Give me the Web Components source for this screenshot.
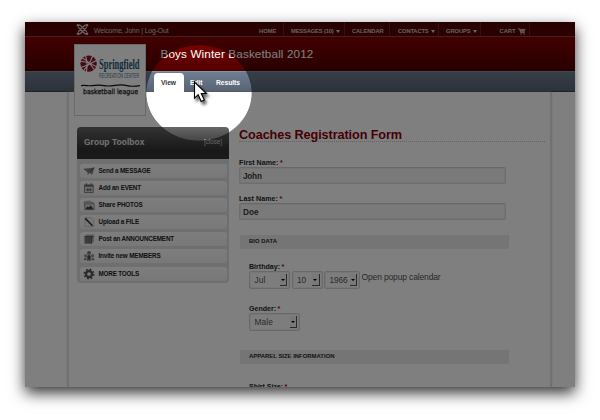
<!DOCTYPE html>
<html lang="en"><head><meta charset="utf-8"><title>Coaches Registration</title>
<style>
html,body{margin:0;width:600px;height:420px;overflow:hidden;background:#fff;font-family:"Liberation Sans",Arial,sans-serif}
body{display:grid;place-items:start}
</style></head><body>
<league-page></league-page>
<script>
const define=(name,html,setup)=>customElements.define(name,class extends HTMLElement{
  connectedCallback(){
    if(this.shadowRoot)return;
    const r=this.attachShadow({mode:'open'});
    const t=document.createElement('template');
    t.innerHTML=typeof html==='function'?html(this):html;
    r.append(t.content.cloneNode(true));
    if(setup)setup(this,r);
  }
});

/* One line of text whose tracking is adjusted to fill the width in "w". */
define('fit-text',e=>`<style>:host{display:inline-block;white-space:nowrap;flex:none;width:${e.getAttribute('w')}px}span{display:inline-block}</style><span><slot></slot></span>`,(e,r)=>{
  const s=r.querySelector('span'),n=e.textContent.length;
  s.style.letterSpacing=((+e.getAttribute('w')-s.getBoundingClientRect().width)/n).toFixed(3)+'px';
});

define('menu-item',e=>`<style>
:host{display:flex;align-items:center;box-sizing:border-box;width:${e.getAttribute('box')}px;height:14px;padding-left:${e.getAttribute('pad')}px;border-right:1px solid #682020;font:bold 5.8px/14px "Liberation Sans",sans-serif;color:#d2c4c4;gap:2.5px;padding-top:4px;flex:none}
i{border:2.6px solid transparent;border-top:3.5px solid #d8cccc;border-bottom:0}
</style><slot></slot>${e.hasAttribute('drop')?'<i></i>':''}`);

define('top-bar',`<style>
:host{display:flex;height:15px;box-sizing:border-box;background:linear-gradient(#4c0000,#5a0000);border-bottom:1px solid #7d4545;padding-left:51px}
.w{font-size:6.9px;line-height:16.5px;color:#d0c4c4;margin:0 90.5px 0 5px;padding-top:1px;height:13px}
svg{flex:none}
</style>
<svg width="13" height="13" viewBox="0 0 13 13" style="margin-top:1px" fill="none" stroke="#d5c5c5" stroke-width="1.3" stroke-linecap="round"><path d="M2.6 4.6L8 10Q9.6 11.6 10.9 10.3M10.4 4.6L5 10Q3.4 11.6 2.1 10.3M2.6 8.4L8 3Q9.6 1.4 10.9 2.7M10.4 8.4L5 3Q3.4 1.4 2.1 2.7"/><g fill="#d5c5c5" stroke="none"><circle cx="2" cy="2.2" r="1.3"/><circle cx="11" cy="2.2" r="1.3"/><circle cx="2" cy="10.8" r="1.3"/><circle cx="11" cy="10.8" r="1.3"/></g></svg>
<div class="w"><fit-text w="74.5">Welcome, John | Log-Out</fit-text></div>
<menu-item box="24.5" pad="0"><fit-text w="17.5">HOME</fit-text></menu-item>
<menu-item box="61" pad="7.5" drop><fit-text w="42.5">MESSAGES (10)</fit-text></menu-item>
<menu-item box="45.5" pad="7.5"><fit-text w="31.5">CALENDAR</fit-text></menu-item>
<menu-item box="49" pad="8" drop><fit-text w="30.5">CONTACTS</fit-text></menu-item>
<menu-item box="42" pad="7" drop><fit-text w="24.5">GROUPS</fit-text></menu-item>
<menu-item box="49" pad="18.5"><fit-text w="16">CART</fit-text><svg width="8" height="7" viewBox="0 0 8 7" fill="none" stroke="#d8cccc"><path d="M0 .8h1.5L2.7 4.6h4M2 1.4h5.3M2.2 2.4h4.8M2.5 3.3h4.2" stroke-width=".9"/><path d="M3 5.4v1.2M6.2 5.4v1.2" stroke-width="1.2"/></svg></menu-item>`);

define('team-header',`<style>
:host{display:block;height:34px;box-sizing:border-box;padding:3px 0 0 135.5px;background:linear-gradient(#850000,#500000);color:#fff;font-size:11.7px;line-height:27px}
</style><fit-text w="153">Boys Winter Basketball 2012</fit-text>`);

define('tab-bar',`<style>
:host{display:flex;height:21px;box-sizing:border-box;padding:2px 0 0 129px;background:linear-gradient(#6e7e91,#586474);border-top:1px solid #8391a1;border-bottom:1px solid #3b4351;color:#fff;font:bold 6.7px/18px "Liberation Sans",sans-serif}
.v{width:22.5px;height:20px;line-height:20px;margin-top:-1px;padding-left:7px;background:#fff;color:#333;border-radius:4px 4px 0 0}
.e{margin:0 13.5px 0 6.5px;text-decoration:underline}
</style><div class="v"><fit-text w="15">View</fit-text></div><div class="e"><fit-text w="12.5">Edit</fit-text></div><fit-text w="24">Results</fit-text>`);

define('team-logo',`<style>
:host{display:block;box-sizing:border-box;width:72px;height:72px;background:#fff;border:1px solid #d5d5d5}
svg{display:block}
</style><svg width="70" height="70" viewBox="75 45 70 70">
<circle cx="88.6" cy="63.6" r="8.2" fill="#8e1230"/>
<g fill="none" stroke="#fff" stroke-width="1.1"><path d="M80.5 61.5Q88 61.5 97 67M85.5 55.5Q88 63 86.4 72M92.5 56Q90 64 84 70M81 67.5Q89 65 96.3 60.5M81.8 58Q88 60 94.5 70"/></g>
<text transform="translate(99 69) scale(.565 1)" font-family="Liberation Serif,serif" font-size="15" font-weight="bold" fill="#175878">Springfield</text>
<text transform="translate(99 78) scale(.587 1)" font-family="Liberation Sans,sans-serif" font-size="6.3" fill="#4d7188">RECREATION CENTER</text>
<path d="M81 85.6q3-.5 6 0t8-.2 9 .2 11-.2 12 .2 13 0" stroke="#111" stroke-width="1.1" fill="none"/>
<text x="83" y="94" textLength="55" lengthAdjust="spacingAndGlyphs" font-family="DejaVu Sans,sans-serif" font-size="7" fill="#111" stroke="#111" stroke-width=".25">basketball league</text>
</svg>`);

const icons={
send:'<path d="M1 4L12 2.5 9.5 10 6.5 8 5 10.5 4.6 7z" fill="#888"/><path d="M4.6 7L11.5 3 6.5 8M1 4l3.6 3" stroke="#555" fill="none" stroke-width=".8"/>',
event:'<path d="M1.5 3h9v8h-9z" fill="#ddd" stroke="#777"/><path d="M1.5 4h9" stroke="#777" stroke-width="2"/><path d="M3.5 1.3v2.5M8.5 1.3v2.5M3 8h6M5 6.5v3M7.5 6.5v3" stroke="#666" stroke-width="1.1"/>',
photo:'<path d="M1 3l5-1 5 2 .5 7H2z" fill="#bbb" stroke="#999" stroke-width=".7"/><path d="M2 5h9.5v6H2z" fill="#ddd" stroke="#777" stroke-width=".7"/><path d="M2.5 10.5l2-3 1.5 1 2-2 3 4z" fill="#444"/>',
file:'<path d="M2 1.5h7l2 2V11H2z" fill="#eee" stroke="#bbb" stroke-width=".7"/><path d="M2.3 2.5L9.8 10" stroke="#333" stroke-width="1.6"/>',
post:'<path d="M3 1.5h8.5v8H3z" fill="#bbb"/><path d="M1.5 3.5H9V11H1.5z" fill="#777"/><path d="M1.5 3.5h9L9 5M9 4v7" stroke="#555" fill="none"/>',
people:'<circle cx="6.2" cy="3" r="2" fill="#777"/><circle cx="2.8" cy="6" r="1.8" fill="#999"/><circle cx="9.8" cy="6" r="1.8" fill="#999"/><path d="M4 6.2l2.2-1 2.2 1V11H4zM.8 9.5Q1 7.8 3.5 8v2.5H1zM9 8q2.5 0 2.7 1.5v1H9z" fill="#888"/><path d="M6.2 5.5v4" stroke="#222" stroke-width="1.1"/>',
gear:'<circle cx="6.2" cy="6.2" r="3.1" fill="none" stroke="#555" stroke-width="2.4"/><circle cx="6.2" cy="6.2" r="4.9" fill="none" stroke="#555" stroke-width="1.5" stroke-dasharray="1.9 1.95"/>'
};
define('tool-row',e=>`<style>
:host{display:flex;align-items:center;height:14px;margin-bottom:3.1px;box-sizing:border-box;border-radius:3px;background:linear-gradient(#fcfcfc,#f0f0f0);padding-left:3.5px;gap:3.5px;font:bold 6.3px/14px "Liberation Sans",sans-serif;color:#222}
</style><svg width="12" height="12" viewBox="0 0 12.4 12.4">${icons[e.getAttribute('icon')]}</svg><slot></slot>`);

define('tool-box',`<style>
:host{display:block;width:152px;box-sizing:border-box;height:156px;border-radius:4px;background:#dedede;flex:none}
header{height:32px;box-sizing:border-box;display:flex;align-items:center;padding:0 7px 2px;justify-content:space-between;background:linear-gradient(#666,#303030 75%,#353535);border-radius:4px 4px 0 0;border-bottom:1px solid #333}
b{font-size:8.4px;color:#e6e6e6}small{font-size:6.3px;color:#ccc}
section{padding:5px 2.5px 0}
</style><header><b><fit-text w="60.5">Group Toolbox</fit-text></b><small><fit-text w="18">[close]</fit-text></small></header>
<section>
<tool-row icon="send"><fit-text w="52">Send a MESSAGE</fit-text></tool-row>
<tool-row icon="event"><fit-text w="42.5">Add an EVENT</fit-text></tool-row>
<tool-row icon="photo"><fit-text w="44">Share PHOTOS</fit-text></tool-row>
<tool-row icon="file"><fit-text w="40.5">Upload a FILE</fit-text></tool-row>
<tool-row icon="post"><fit-text w="75.5">Post an ANNOUNCEMENT</fit-text></tool-row>
<tool-row icon="people"><fit-text w="62">Invite new MEMBERS</fit-text></tool-row>
<tool-row icon="gear"><fit-text w="40.5">MORE TOOLS</fit-text></tool-row>
</section>`);

define('field-label',e=>`<style>:host{display:flex;gap:1.5px;height:9px;font:bold 7.1px/11px "Liberation Sans",sans-serif;color:#262626}em{color:#b00020;font-style:normal}</style><slot></slot><em>*</em>`);
define('text-field',`<style>:host{display:block;box-sizing:border-box;width:267px;height:17px;border:1px solid #dcdcdc;border-top-color:#d0d0d0;box-shadow:inset 0 0 0 1px #e9e9e9;border-radius:2px;background:#f5f5f5;padding-left:3px;font:bold 8.2px/17px "Liberation Sans",sans-serif;color:#3c3c3c}</style><slot></slot>`);
define('drop-down',e=>`<style>
:host{display:flex;justify-content:space-between;align-items:center;box-sizing:border-box;width:${e.getAttribute('box')}px;height:18px;border:1px solid #d2d2d2;box-shadow:inset 0 0 0 1px #eee;border-radius:2px;background:#fafafa;padding:0 2px 0 4.5px;font:8.3px/17px "Liberation Sans",sans-serif;color:#555;flex:none}
i{box-sizing:border-box;width:7.5px;height:12px;background:#f2f2f2;border-right:1px solid #555;border-bottom:1px solid #555;display:grid;place-items:center}
i::before{content:"";border:2px solid transparent;border-top:2.5px solid #000;border-bottom:0}
</style><slot></slot><i></i>`);
define('section-bar',`<style>:host{display:block;box-sizing:border-box;width:269.5px;height:13.5px;background:#ebebeb;padding-left:9.5px;font:bold 5.9px/13.5px "Liberation Sans",sans-serif;color:#262626}</style><slot></slot>`);

define('registration-form',`<style>
:host{display:block;width:306px;flex:none}
h1{margin:0 0 16px;height:15px;box-sizing:border-box;border-bottom:1px dotted #c4c4c4;font:bold 12.7px/16.5px "Liberation Sans",sans-serif;color:#8c0008}
.gap{margin-top:10px}
.in{padding-left:10px}
.row{display:flex;gap:1.5px}
.open{font-size:8.5px;line-height:12px;color:#505050}
</style>
<h1><fit-text w="163">Coaches Registration Form</fit-text></h1>
<field-label><fit-text w="39.5">First Name:</fit-text></field-label><text-field><fit-text w="18.7">John</fit-text></text-field>
<field-label class="gap"><fit-text w="39">Last Name:</fit-text></field-label><text-field><fit-text w="15.7">Doe</fit-text></text-field>
<section-bar style="margin:15px 0 13.5px .5px"><fit-text w="28">BIO DATA</fit-text></section-bar>
<div class="in"><field-label><fit-text w="31">Birthday:</fit-text></field-label>
<div class="row"><drop-down box="41"><fit-text w="11">Jul</fit-text></drop-down><drop-down box="31"><fit-text w="9">10</fit-text></drop-down><drop-down box="36"><fit-text w="18">1966</fit-text></drop-down><span class="open"><fit-text w="79">Open popup calendar</fit-text></span></div>
<field-label style="margin-top:15px"><fit-text w="27">Gender:</fit-text></field-label><drop-down box="51"><fit-text w="18.5">Male</fit-text></drop-down></div>
<section-bar style="margin:19px 0 18px .5px"><fit-text w="85.5">APPAREL SIZE INFORMATION</fit-text></section-bar>
<div class="in"><field-label><fit-text w="34">Shirt Size:</fit-text></field-label></div>`);

define('spot-light',`<style>:host{position:absolute;inset:0;pointer-events:none}
.dim{position:absolute;inset:0;background:radial-gradient(ellipse 53px 48px at 174px 71px,transparent 98.5%,rgba(0,0,0,.5) 100%)}
svg{position:absolute;left:165px;top:56px;filter:drop-shadow(2px 3px 1.5px rgba(0,0,0,.65))}</style>
<div class="dim"></div>
<svg width="20" height="28" viewBox="0 0 20 28"><path d="M4.5 4v16.2l3.7-3.5 3 6.8 3.1-1.4-3-6.6h5.1z" fill="#fff" stroke="#000" stroke-width="1.1"/></svg>`);

define('league-page',`<style>
:host{display:block;position:relative;margin:22px 0 0 25px;width:550px;height:365px;background:#fff;box-shadow:0 6px 14px rgba(0,0,0,.8)}
.clip{height:365px;overflow:hidden}
main{display:flex;gap:10px;box-sizing:border-box;width:485px;height:295px;margin-left:42px;padding:35px 0 0 8px;border-left:2px solid #e2e2e2;border-right:2px solid #e2e2e2;box-shadow:0 0 1px #ccc}
team-logo{position:absolute;left:49px;top:22px}
</style>
<div class="clip"><top-bar></top-bar><team-header></team-header><tab-bar></tab-bar>
<main><tool-box></tool-box><registration-form></registration-form></main></div>
<team-logo></team-logo><spot-light></spot-light>`);
</script></body></html>
